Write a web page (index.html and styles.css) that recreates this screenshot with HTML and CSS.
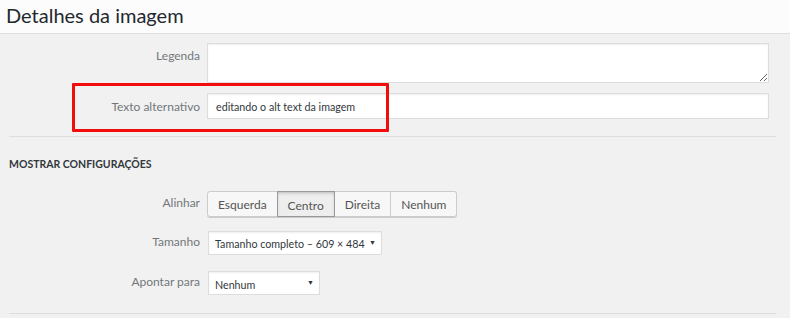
FILE: index.html
```html
<!DOCTYPE html>
<html>
<head>
    <title>Detalhes da imagem</title>
    <meta charset="utf-8">
    <link rel="stylesheet" href="styles.css">
</head>
<body>
    <div class="media-header">
        <h1>Detalhes da imagem</h1>
    </div>

    <div class="media-body">
        <div class="attachment-fields">
            <label class="setting">
                <span class="name">Legenda</span>
                <textarea class="caption"></textarea>
            </label>
            <label class="setting">
                <span class="name">Texto alternativo</span>
                <input type="text" class="alt-text" value="editando o alt text da imagem">
            </label>
            <div class="highlight"></div>
        </div>

        <div class="display-settings">
            <h2>Mostrar configurações</h2>

            <div class="setting align">
                <span class="name">Alinhar</span>
                <div class="button-group">
                    <button>Esquerda</button>
                    <button class="active">Centro</button>
                    <button>Direita</button>
                    <button>Nenhum</button>
                </div>
            </div>

            <div class="setting size">
                <span class="name">Tamanho</span>
                <span class="select-wrap size-select">
                    <select>
                        <option>Tamanho completo – 609 × 484</option>
                    </select>
                </span>
            </div>

            <div class="setting link-to">
                <span class="name">Apontar para</span>
                <span class="select-wrap link-select">
                    <select>
                        <option>Nenhum</option>
                    </select>
                </span>
            </div>
        </div>
    </div>
</body>
</html>
```

FILE: styles.css
```css
body {
    margin: 0;
    background: #f1f1f1;
    font-family: Lato, "Open Sans", sans-serif;
    color: #444;
}
.media-header {
    height: 33px;
    background: #fcfcfc;
    border-bottom: 1px solid #dddddd;
}
.media-header h1 {
    margin: 0;
    padding-left: 6px;
    font-size: 20px;
    font-weight: 400;
    line-height: 31px;
    color: #23282d;
}
.media-body {
    margin: 0 14px 0 9px;
}
.attachment-fields {
    position: relative;
    padding: 9px 0 17px;
    border-bottom: 1px solid #dddddd;
}
.setting {
    display: flex;
    align-items: flex-start;
}
.setting .name {
    flex: 0 0 191px;
    margin-right: 7px;
    text-align: right;
    font-size: 12px;
    color: #72777c;
}
.caption,
.alt-text {
    box-sizing: border-box;
    width: 562px;
    margin: 0;
    border: 1px solid #dddddd;
    background: #fff;
    box-shadow: inset 0 1px 2px rgba(0, 0, 0, 0.07);
    font-family: inherit;
    font-size: 10.7px;
    color: #32373c;
    outline: none;
}
.caption {
    height: 40px;
    resize: vertical;
}
.attachment-fields .setting:first-child .name {
    padding-top: 5px;
}
.attachment-fields .setting + .setting {
    margin-top: 10px;
    align-items: center;
}
.alt-text {
    height: 26px;
    padding: 0 8px;
}
.highlight {
    position: absolute;
    left: 63px;
    top: 49px;
    width: 311px;
    height: 43px;
    border: 3px solid #f20d0d;
    border-radius: 1px;
}
.display-settings {
    padding-bottom: 18px;
    border-bottom: 1px solid #dddddd;
}
.display-settings h2 {
    margin: 0 0 20px;
    padding-top: 20px;
    font-size: 10.5px;
    line-height: 14px;
    font-weight: 700;
    text-transform: uppercase;
    color: #32373c;
}
.display-settings .setting {
    align-items: center;
}
.display-settings .setting .name {
    position: relative;
    top: -2px;
}
.display-settings .setting + .setting {
    margin-top: 14px;
}
.display-settings .link-to {
    margin-top: 16px !important;
}
.button-group {
    display: flex;
    box-shadow: 0 1px 0 #cccccc;
    border-radius: 3px;
}
.button-group button {
    height: 26px;
    margin: 0;
    padding: 0 10px;
    border: 1px solid #cccccc;
    border-left-width: 0;
    background: #f7f7f7;
    font-family: inherit;
    font-size: 12px;
    color: #555;
}
.button-group button:first-child {
    border-left-width: 1px;
    border-radius: 3px 0 0 3px;
}
.button-group button:last-child {
    border-radius: 0 3px 3px 0;
}
.button-group button.active {
    background: #eeeeee;
    border-color: #999999;
    border-left-width: 1px;
    margin-left: -1px;
    box-shadow: inset 0 2px 5px -3px rgba(0, 0, 0, 0.5);
    padding-top: 2px;
}
.button-group button.active + button {
    border-left-width: 0;
}
.select-wrap {
    position: relative;
    display: inline-block;
    margin-left: 1px;
}
.select-wrap select {
    -webkit-appearance: none;
    appearance: none;
    box-sizing: border-box;
    height: 24px;
    margin: 0;
    padding: 0 14px 0 6px;
    border: 1px solid #dddddd;
    border-radius: 0;
    background: #fff;
    box-shadow: inset 0 1px 2px rgba(0, 0, 0, 0.07);
    font-family: inherit;
    font-size: 10.7px;
    color: #32373c;
}
.select-wrap::after {
    content: "\25BC";
    position: absolute;
    right: 6px;
    top: 7px;
    font-size: 7px;
    color: #32373c;
    pointer-events: none;
}
.size-select select {
    width: 174px;
}
.link-select select {
    width: 112px;
    padding-top: 2px;
}
```
